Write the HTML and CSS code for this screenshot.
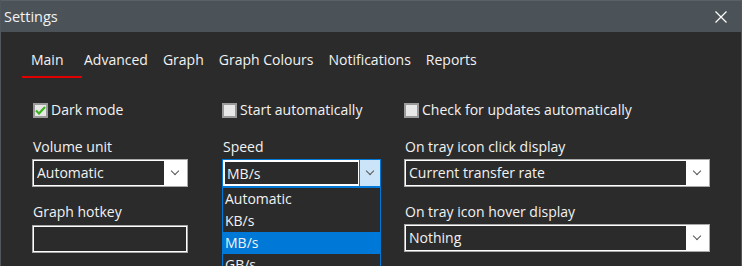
FILE: index.html
```html
<!DOCTYPE html>
<html lang="en">
    <head>
        <meta charset="UTF-8" />
        <title>Settings</title>
        <link rel="stylesheet" href="styles.css">
    </head>
    <body>
        <div class="window">
            <header class="titlebar">
                <span class="title">Settings</span>
                <svg class="close" width="12" height="12" viewBox="0 0 12 12">
                    <path d="M0.5 0.5 L11.5 11.5 M11.5 0.5 L0.5 11.5" stroke="#fff" stroke-width="1.2" />
                </svg>
            </header>
            <main class="content">
                <nav class="tabs">
                    <span class="tab tab-main active">Main</span>
                    <span class="tab">Advanced</span>
                    <span class="tab">Graph</span>
                    <span class="tab">Graph Colours</span>
                    <span class="tab">Notifications</span>
                    <span class="tab">Reports</span>
                </nav>

                <div class="form">
                    <label class="check">
                        <span class="box checked">
                            <svg width="11" height="9" viewBox="0 0 11 9">
                                <path d="M1 4.5 L4 7.5 L10 1" fill="none" stroke="#3cb521" stroke-width="2.2" />
                            </svg>
                        </span>
                        Dark mode
                    </label>
                    <label class="check"><span class="box"></span>Start automatically</label>
                    <label class="check"><span class="box"></span>Check for updates automatically</label>

                    <div class="field">
                        <span class="label">Volume unit</span>
                        <div class="combo short">
                            <span class="value">Automatic</span>
                            <span class="arrow"><i class="chev"></i></span>
                        </div>
                    </div>
                    <div class="field">
                        <span class="label">Speed</span>
                        <div class="combo speed open">
                            <span class="value">MB/s</span>
                            <span class="arrow"><i class="chev"></i></span>
                            <ul class="list">
                                <li>Automatic</li>
                                <li>KB/s</li>
                                <li class="selected">MB/s</li>
                                <li>GB/s</li>
                            </ul>
                        </div>
                    </div>
                    <div class="field">
                        <span class="label">On tray icon click display</span>
                        <div class="combo wide">
                            <span class="value">Current transfer rate</span>
                            <span class="arrow"><i class="chev"></i></span>
                        </div>
                    </div>

                    <div class="field">
                        <span class="label">Graph hotkey</span>
                        <div class="hotkey"></div>
                    </div>
                    <div class="field"></div>
                    <div class="field">
                        <span class="label">On tray icon hover display</span>
                        <div class="combo wide">
                            <span class="value">Nothing</span>
                            <span class="arrow"><i class="chev"></i></span>
                        </div>
                    </div>
                </div>
            </main>
        </div>
    </body>
</html>
```

FILE: styles.css
```css
* {
    box-sizing: border-box;
    margin: 0;
    padding: 0;
}
body {
    font-family: "Open Sans", "Noto Sans", sans-serif;
    font-size: 14px;
    color: #f2f2f2;
    background: #2b2b2b;
    overflow: hidden;
}
.window {
    width: 742px;
    height: 266px;
    border-left: 1px solid #50585e;
    border-right: 1px solid #50585e;
    background: #2b2b2b;
    overflow: hidden;
}
.titlebar {
    height: 32px;
    background: #4b5359;
    border-top: 1px solid #5a6268;
    display: flex;
    align-items: center;
    justify-content: space-between;
    padding: 0 14px 0 3px;
}
.title {
    font-size: 14.5px;
    line-height: 20px;
}
.close {
    display: block;
}
.content {
    padding: 18px 0 0 21px;
}
/* Onglets */
.tabs {
    display: flex;
    line-height: 20px;
}
.tab {
    padding: 0 7.5px 6px 7.5px;
    border-bottom: 2px solid transparent;
}
.tab-main {
    padding: 0 18px 6px 9px;
    margin-right: -5px;
}
.tab.active {
    border-bottom-color: #e00000;
}
/* Grille du formulaire */
.form {
    display: grid;
    grid-template-columns: 190px 182px 306px;
    grid-template-rows: 35px 65px 60px;
    margin: 24px 0 0 10px;
    align-items: start;
}
.check {
    display: flex;
    align-items: center;
    gap: 3px;
    line-height: 16px;
}
.check:first-child {
    margin-left: 1px;
}
.box {
    width: 15px;
    height: 15px;
    border: 2px solid #9a9a9a;
    background: #e8e8e8;
    display: flex;
    align-items: center;
    justify-content: center;
}
.field {
    display: flex;
    flex-direction: column;
}
.label {
    line-height: 20px;
    margin: 0 0 2px 1px;
}
.combo {
    position: relative;
    height: 28px;
    border: 1px solid #a9a9a9;
    box-shadow: inset 0 0 0 1px #ffffff;
    display: flex;
    align-items: stretch;
}
.combo.short {
    width: 156px;
}
.combo.speed {
    width: 159px;
}
.combo.wide {
    width: 306px;
}
.value {
    flex: 1;
    line-height: 24px;
    padding-left: 4px;
    margin: 1px 0;
}
.arrow {
    width: 22px;
    margin: 1px 1px 1px 0;
    background: #ffffff;
    display: flex;
    align-items: center;
    justify-content: center;
}
.chev {
    width: 6px;
    height: 6px;
    border-right: 1px solid #555;
    border-bottom: 1px solid #555;
    transform: translateY(-2px) rotate(45deg);
}
/* Liste déroulante ouverte */
.combo.open {
    border-color: #0078d7;
    box-shadow: none;
}
.combo.open .value {
    margin: 0;
    border: 2px solid #ffffff;
    border-right-width: 1px;
    padding-left: 2px;
}
.combo.open .arrow {
    margin: 0;
    width: 21px;
    background: #cce4f7;
    border-left: 1px solid #0078d7;
}
.list {
    list-style: none;
    position: absolute;
    top: 27px;
    left: -1px;
    width: 159px;
    height: 90px;
    border: 1px solid #0078d7;
    background: #2b2b2b;
    overflow: hidden;
}
.list li {
    height: 22px;
    line-height: 22px;
    padding-left: 2px;
}
.list li.selected {
    background: #0078d7;
}
.hotkey {
    width: 156px;
    height: 28px;
    margin-top: 1px;
    border: 1px solid #a9a9a9;
    box-shadow: inset 0 0 0 1px #ffffff;
}
```
